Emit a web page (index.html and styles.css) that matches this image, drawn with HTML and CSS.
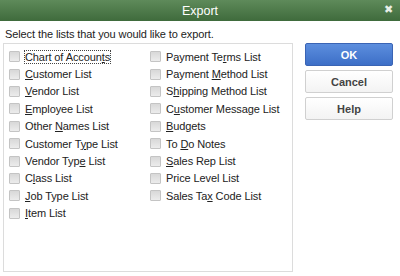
FILE: index.html
```html
<!DOCTYPE html>
<html lang="en">
<head>
    <meta charset="UTF-8">
    <title>Export</title>
    <link rel="stylesheet" href="styles.css">
</head>
<body>

<div class="dialog">
    <div class="titlebar">
        <span class="title">Export</span>
        <span class="close">&#10006;</span>
    </div>

    <div class="content">
        <p class="prompt">Select the lists that you would like to export.</p>

        <div class="main">
            <div class="listbox">
                <div class="column">
                    <label class="item"><span class="box"></span><span class="focused">Chart of Accoun<u>t</u>s</span></label>
                    <label class="item"><span class="box"></span><span><u>C</u>ustomer List</span></label>
                    <label class="item"><span class="box"></span><span><u>V</u>endor List</span></label>
                    <label class="item"><span class="box"></span><span><u>E</u>mployee List</span></label>
                    <label class="item"><span class="box"></span><span>Other <u>N</u>ames List</span></label>
                    <label class="item"><span class="box"></span><span>Customer T<u>y</u>pe List</span></label>
                    <label class="item"><span class="box"></span><span>Vendor Typ<u>e</u> List</span></label>
                    <label class="item"><span class="box"></span><span>C<u>l</u>ass List</span></label>
                    <label class="item"><span class="box"></span><span><u>J</u>ob Type List</span></label>
                    <label class="item"><span class="box"></span><span><u>I</u>tem List</span></label>
                </div>
                <div class="column">
                    <label class="item"><span class="box"></span><span>Payment Te<u>r</u>ms List</span></label>
                    <label class="item"><span class="box"></span><span>Payment <u>M</u>ethod List</span></label>
                    <label class="item"><span class="box"></span><span>S<u>h</u>ipping Method List</span></label>
                    <label class="item"><span class="box"></span><span>C<u>u</u>stomer Message List</span></label>
                    <label class="item"><span class="box"></span><span><u>B</u>udgets</span></label>
                    <label class="item"><span class="box"></span><span>To <u>D</u>o Notes</span></label>
                    <label class="item"><span class="box"></span><span><u>S</u>ales Rep List</span></label>
                    <label class="item"><span class="box"></span><span>Price Level List</span></label>
                    <label class="item"><span class="box"></span><span>Sales Ta<u>x</u> Code List</span></label>
                </div>
            </div>

            <div class="buttons">
                <button class="btn primary">OK</button>
                <button class="btn">Cancel</button>
                <button class="btn">Help</button>
            </div>
        </div>
    </div>
</div>

</body>
</html>
```

FILE: styles.css
```css
body {
    margin: 0;
    font-family: 'Liberation Sans', Arial, sans-serif;
    font-size: 11px;
    letter-spacing: -0.1px;
    color: #222;
    background-color: #ffffff;
}
.dialog {
    width: 400px;
    height: 276px;
    display: flex;
    flex-direction: column;
}
.titlebar {
    height: 21px;
    background: linear-gradient(#5e8a5a, #3f6b3c);
    display: flex;
    align-items: center;
    justify-content: center;
    position: relative;
    color: #ffffff;
}
.title {
    font-size: 12.5px;
    letter-spacing: 0;
}
.close {
    position: absolute;
    right: 7px;
    top: 3px;
    font-size: 11px;
    color: #e8efe6;
}
.content {
    padding: 6px 7px 0 3px;
}
.prompt {
    margin: 0 0 2px 2px;
    line-height: 14px;
    color: #222;
}
.main {
    display: flex;
    gap: 12px;
}
.listbox {
    width: 290px;
    height: 229px;
    border: 1px solid #dcdcdc;
    box-sizing: border-box;
    display: flex;
    padding: 4px 0 0 5px;
}
.column {
    width: 141px;
    display: flex;
    flex-direction: column;
}
.item {
    display: flex;
    align-items: center;
    height: 17.4px;
    gap: 5px;
}
.box {
    width: 9px;
    height: 9px;
    border: 1px solid #c4c4c4;
    background: linear-gradient(#d8d8d8, #ececec);
    border-radius: 1px;
}
.focused {
    outline: 1px dotted #444;
}
u {
    text-decoration-thickness: 1px;
}
.buttons {
    display: flex;
    flex-direction: column;
    gap: 4px;
    width: 88px;
}
.btn {
    height: 23px;
    font-family: 'Liberation Sans', Arial, sans-serif;
    font-size: 11px;
    font-weight: bold;
    color: #444;
    background: linear-gradient(#ffffff, #f3f3f3);
    border: 1px solid #d0d0d0;
    border-radius: 2px;
}
.btn.primary {
    color: #ffffff;
    background: linear-gradient(#5c8ede, #3d6fc7);
    border-color: #3a64b4;
}
```
